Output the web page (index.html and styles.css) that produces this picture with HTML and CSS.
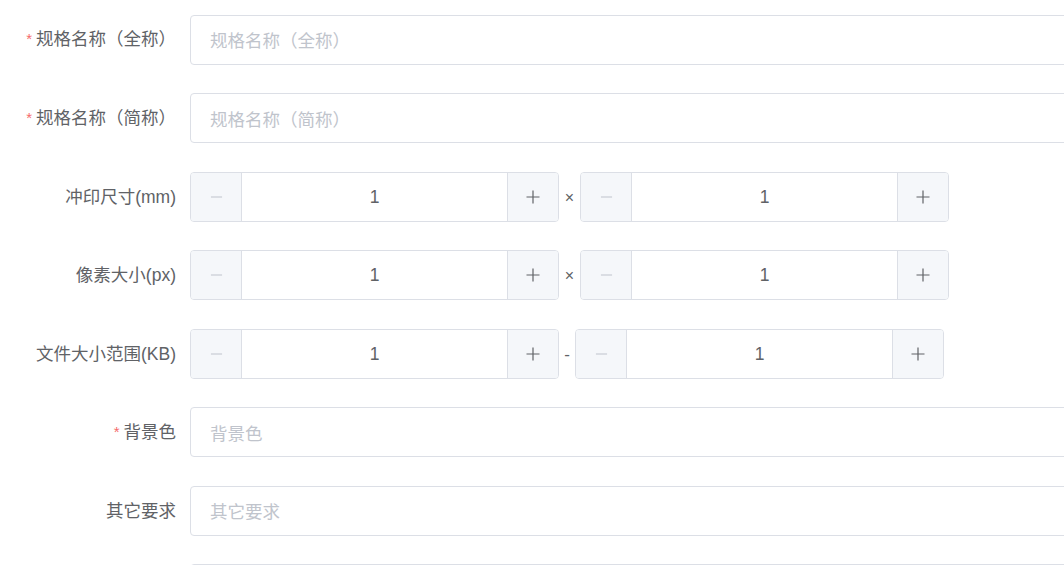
FILE: index.html
```html
<!DOCTYPE html>
<html lang="zh-CN">
<head>
<meta charset="utf-8">
<title>规格表单</title>
<link rel="stylesheet" href="styles.css">
</head>
<body>
<form class="form">
  <div class="item">
    <label class="label"><span class="req">*</span>规格名称（全称）</label>
    <div class="content"><div class="input"><span class="ph">规格名称（全称）</span></div></div>
  </div>
  <div class="item">
    <label class="label"><span class="req">*</span>规格名称（简称）</label>
    <div class="content"><div class="input"><span class="ph">规格名称（简称）</span></div></div>
  </div>
  <div class="item">
    <label class="label">冲印尺寸(mm)</label>
    <div class="content">
      <div class="num">
        <span class="btn dec"><svg width="14" height="14" viewBox="0 0 14 14"><path d="M1 7h12" stroke="currentColor" stroke-width="1.2"/></svg></span>
        <span class="val">1</span>
        <span class="btn inc"><svg width="14" height="14" viewBox="0 0 14 14"><path d="M0.5 7h13M7 0.5v13" stroke="currentColor" stroke-width="1.2"/></svg></span>
      </div>
      <span class="sep">×</span>
      <div class="num">
        <span class="btn dec"><svg width="14" height="14" viewBox="0 0 14 14"><path d="M1 7h12" stroke="currentColor" stroke-width="1.2"/></svg></span>
        <span class="val">1</span>
        <span class="btn inc"><svg width="14" height="14" viewBox="0 0 14 14"><path d="M0.5 7h13M7 0.5v13" stroke="currentColor" stroke-width="1.2"/></svg></span>
      </div>
    </div>
  </div>
  <div class="item">
    <label class="label">像素大小(px)</label>
    <div class="content">
      <div class="num">
        <span class="btn dec"><svg width="14" height="14" viewBox="0 0 14 14"><path d="M1 7h12" stroke="currentColor" stroke-width="1.2"/></svg></span>
        <span class="val">1</span>
        <span class="btn inc"><svg width="14" height="14" viewBox="0 0 14 14"><path d="M0.5 7h13M7 0.5v13" stroke="currentColor" stroke-width="1.2"/></svg></span>
      </div>
      <span class="sep">×</span>
      <div class="num">
        <span class="btn dec"><svg width="14" height="14" viewBox="0 0 14 14"><path d="M1 7h12" stroke="currentColor" stroke-width="1.2"/></svg></span>
        <span class="val">1</span>
        <span class="btn inc"><svg width="14" height="14" viewBox="0 0 14 14"><path d="M0.5 7h13M7 0.5v13" stroke="currentColor" stroke-width="1.2"/></svg></span>
      </div>
    </div>
  </div>
  <div class="item">
    <label class="label">文件大小范围(KB)</label>
    <div class="content">
      <div class="num">
        <span class="btn dec"><svg width="14" height="14" viewBox="0 0 14 14"><path d="M1 7h12" stroke="currentColor" stroke-width="1.2"/></svg></span>
        <span class="val">1</span>
        <span class="btn inc"><svg width="14" height="14" viewBox="0 0 14 14"><path d="M0.5 7h13M7 0.5v13" stroke="currentColor" stroke-width="1.2"/></svg></span>
      </div>
      <span class="sep dash">-</span>
      <div class="num">
        <span class="btn dec"><svg width="14" height="14" viewBox="0 0 14 14"><path d="M1 7h12" stroke="currentColor" stroke-width="1.2"/></svg></span>
        <span class="val">1</span>
        <span class="btn inc"><svg width="14" height="14" viewBox="0 0 14 14"><path d="M0.5 7h13M7 0.5v13" stroke="currentColor" stroke-width="1.2"/></svg></span>
      </div>
    </div>
  </div>
  <div class="item">
    <label class="label"><span class="req">*</span>背景色</label>
    <div class="content"><div class="input"><span class="ph">背景色</span></div></div>
  </div>
  <div class="item">
    <label class="label">其它要求</label>
    <div class="content"><div class="input"><span class="ph">其它要求</span></div></div>
  </div>
  <div class="item">
    <label class="label"></label>
    <div class="content"><div class="input"></div></div>
  </div>
</form>
</body>
</html>
```

FILE: styles.css
```css
html, body {
  margin: 0;
  padding: 0;
  background: #ffffff;
  overflow: hidden;
}
body {
  width: 1064px;
  height: 565px;
  font-family: "Liberation Sans", "Noto Sans CJK SC", sans-serif;
  color: #606266;
}
.form {
  padding-top: 14.9px;
}
.item {
  display: flex;
  align-items: center;
  height: 50px;
  margin-bottom: 28.5px;
}
.label {
  flex: 0 0 190px;
  box-sizing: border-box;
  padding-right: 14px;
  text-align: right;
  font-size: 17.5px;
  line-height: 50px;
  color: #606266;
  white-space: nowrap;
}
.req {
  color: #f56c6c;
  font-size: 15px;
  margin-right: 4px;
  position: relative;
  top: -1px;
}
.content {
  display: flex;
  align-items: center;
  flex: 0 0 auto;
}
.input {
  box-sizing: border-box;
  width: 920px;
  height: 50px;
  border: 1px solid #dcdfe6;
  border-radius: 4px;
  padding: 0 19px;
  display: flex;
  align-items: center;
  font-size: 17.5px;
}
.ph {
  color: #c0c4cc;
}
.num {
  box-sizing: border-box;
  width: 369px;
  height: 50px;
  border: 1px solid #dcdfe6;
  border-radius: 4px;
  display: flex;
  overflow: hidden;
}
.btn {
  flex: 0 0 50px;
  background: #f5f7fa;
  display: flex;
  align-items: center;
  justify-content: center;
}
.btn.dec {
  border-right: 1px solid #dcdfe6;
  color: #c0c4cc;
}
.btn.inc {
  border-left: 1px solid #dcdfe6;
  color: #606266;
}
.btn.dec svg {
  width: 13px;
}
.val {
  flex: 1;
  text-align: center;
  line-height: 48px;
  font-size: 17.5px;
  color: #606266;
}
.sep {
  width: 21px;
  text-align: center;
  font-size: 16px;
  color: #606266;
  position: relative;
  top: 1px;
}
.sep.dash {
  width: 16px;
  font-size: 17px;
}
```
